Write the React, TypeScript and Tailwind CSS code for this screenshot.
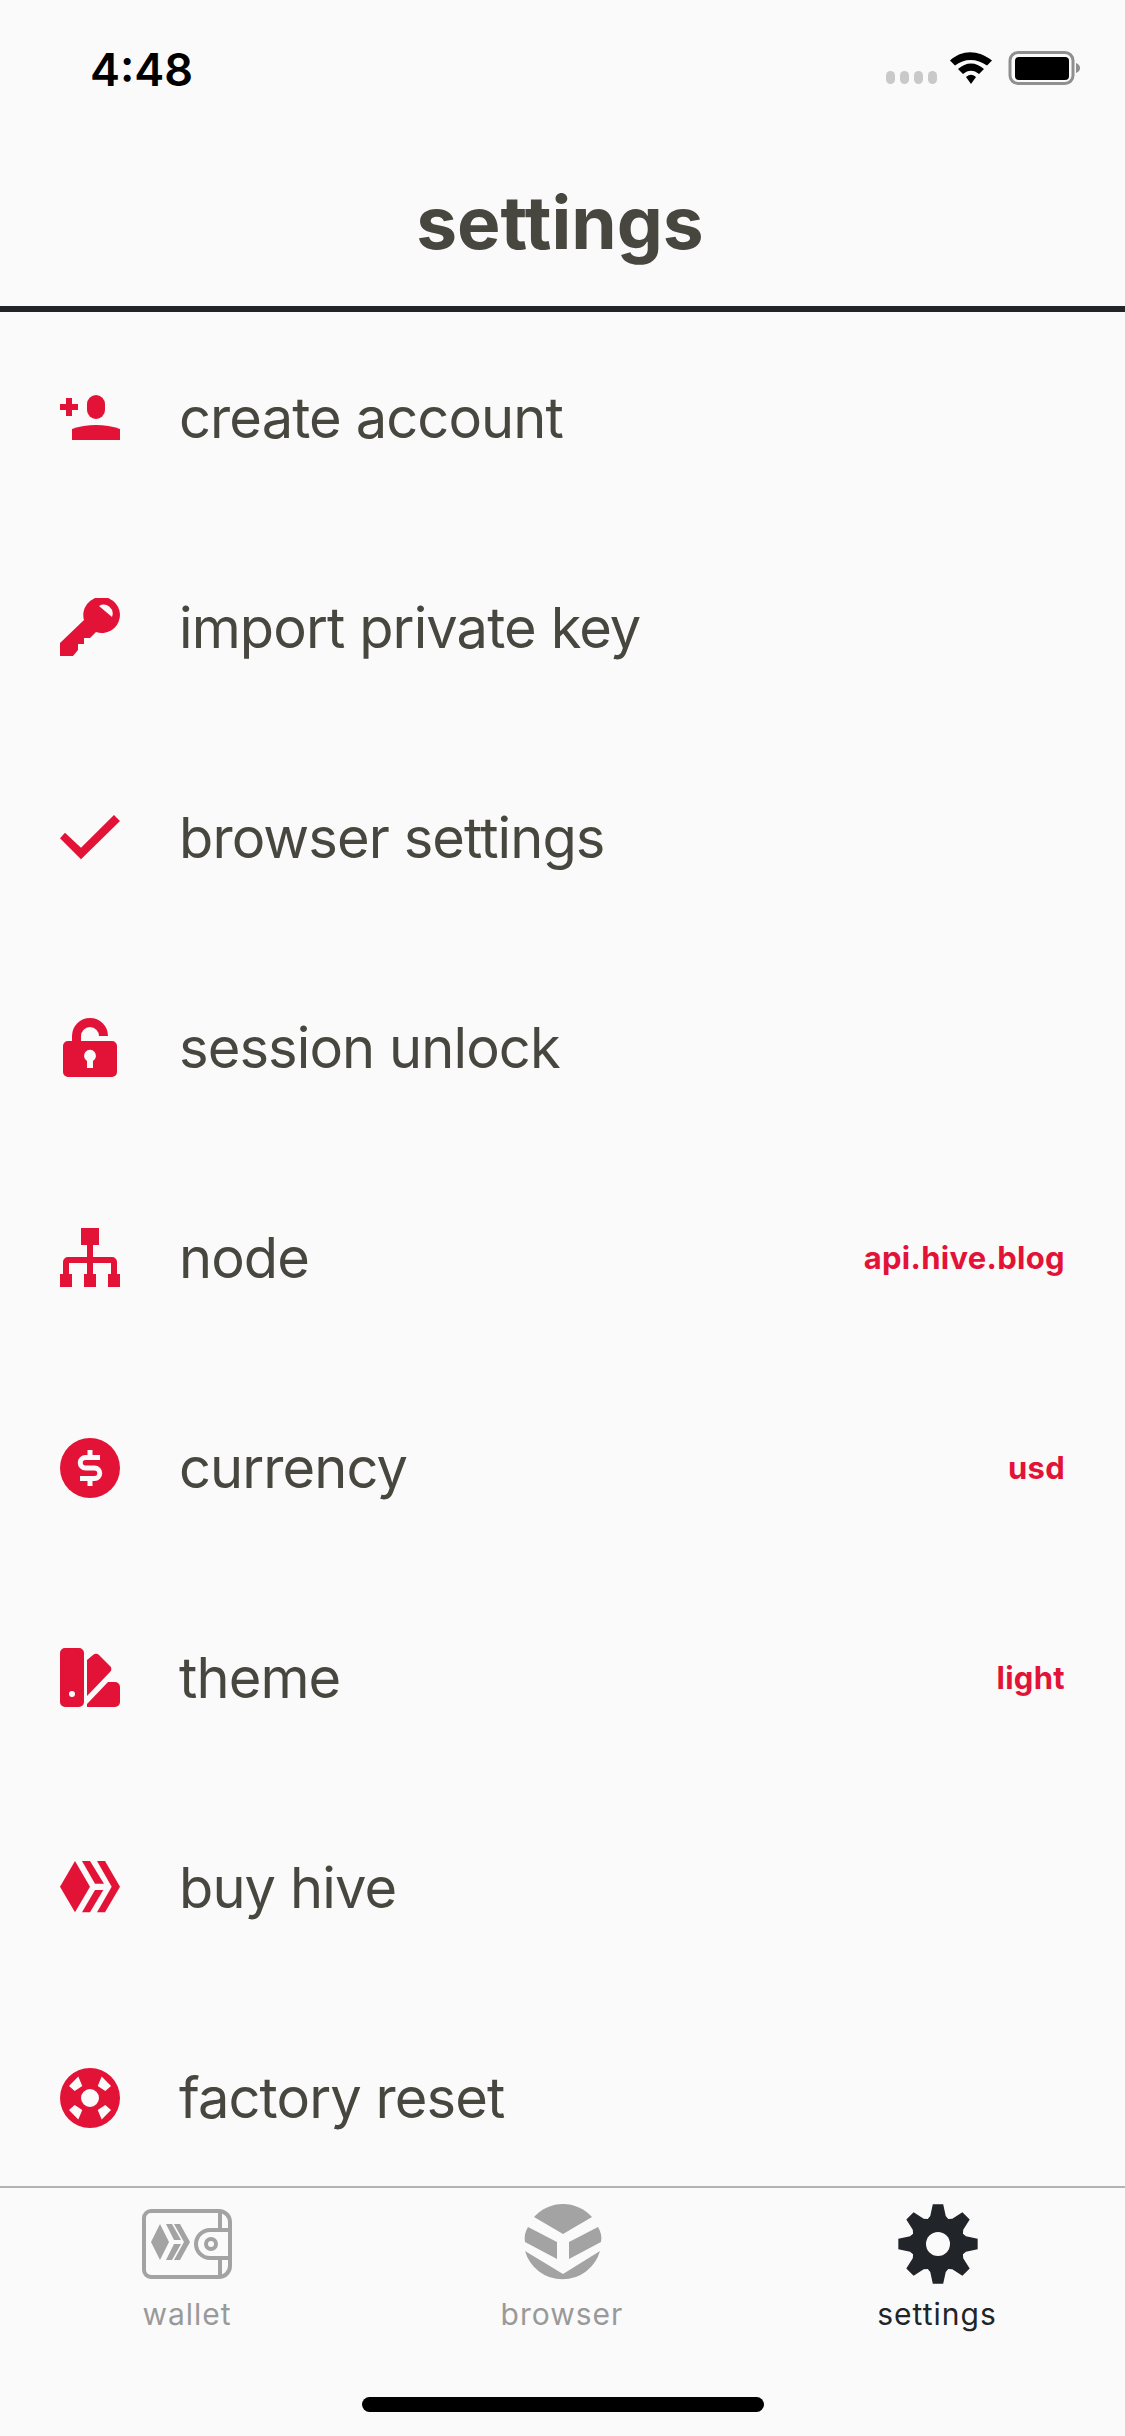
import React from "react";

const RED = "#e31337";

function gearPoints() {
  const pts: string[] = [];
  const cx = 40, cy = 40;
  for (let i = 0; i < 8; i++) {
    const a = (i * Math.PI) / 4 - Math.PI / 2;
    const p = (r: number, off: number) => {
      const x = cx + r * Math.cos(a + off);
      const y = cy + r * Math.sin(a + off);
      return x.toFixed(2) + "," + y.toFixed(2);
    };
    pts.push(p(27, -0.39), p(29, -0.27), p(40, -0.13), p(40, 0.13), p(29, 0.27), p(27, 0.39));
  }
  return pts.join(" ");
}

function Svg({ children, h = 60 }: { children: React.ReactNode; h?: number }) {
  return (
    <svg width="60" height={h} viewBox={`0 0 60 ${h}`} fill={RED} className="shrink-0">
      {children}
    </svg>
  );
}

const PersonAdd = () => (
  <Svg>
    <path d="M6 10h6v6h6v6h-6v6H6v-6H0v-6h6z" />
    <rect x="27" y="7" width="18" height="24" rx="9" />
    <path d="M12 52V41C19 38.500 28 37 36 37S53 38.500 60 41V52Z" />
  </Svg>
);

const KeyIcon = () => (
  <Svg>
    <path
      fillRule="evenodd"
      d="M42 -1A18 18 0 1 1 36 34L30 40H24V46H18V52L13 58H0V45L24 22A18 18 0 0 1 42 -1ZM39 8L52 19A9 9 0 0 0 39 8Z"
    />
  </Svg>
);

const CheckIcon = () => (
  <Svg>
    <path d="M0 30.300L5 24.700L21 39.800L54 7L60 13L21 51.300Z" />
  </Svg>
);

const LockIcon = () => (
  <Svg>
    <path d="M12 23V18A18 18 0 0 1 48 18H39A9 9 0 0 0 21 18V23Z" />
    <path
      fillRule="evenodd"
      d="M8 23H52A5 5 0 0 1 57 28V54A5 5 0 0 1 52 59H8A5 5 0 0 1 3 54V28A5 5 0 0 1 8 23ZM27 43V50H33V43A6 6 0 1 0 27 43Z"
    />
  </Svg>
);

const NodeIcon = () => (
  <Svg>
    <rect x="21" y="0" width="18" height="17" />
    <rect x="27" y="17" width="6" height="30" />
    <path d="M3 47V34A5 5 0 0 1 8 29H52A5 5 0 0 1 57 34V47H51V35H9V47Z" />
    <rect x="0" y="46" width="12" height="13" />
    <rect x="24" y="46" width="12" height="13" />
    <rect x="48" y="46" width="12" height="13" />
  </Svg>
);

const CurrencyIcon = () => (
  <Svg>
    <circle cx="30" cy="30" r="30" />
    <path
      d="M40 19.500H25.500A5.250 5.250 0 0 0 25.500 30H34.500A5.250 5.250 0 0 1 34.500 40.500H20M30 12V19.500M30 40.500V48"
      fill="none"
      stroke="#fafafa"
      strokeWidth="5"
    />
  </Svg>
);

const ThemeIcon = () => (
  <Svg>
    <path
      fillRule="evenodd"
      d="M5 0H19A5 5 0 0 1 24 5V54A5 5 0 0 1 19 59H5A5 5 0 0 1 0 54V5A5 5 0 0 1 5 0ZM12 43A3 3 0 1 0 12 49A3 3 0 0 0 12 43Z"
    />
    <path d="M27 12L33 7A4 4 0 0 1 39 7L50 18A4 4 0 0 1 50 24L27 48Z" />
    <path d="M48 34H55A5 5 0 0 1 60 39V54A5 5 0 0 1 55 59H27V56Z" />
  </Svg>
);

const HiveIcon = () => (
  <Svg>
    <path d="M15 3L30 28.700L15 54.300L0 28.700Z" />
    <path d="M22 3H30L44 25.700H35Z" />
    <path d="M35 32H43.300L30 54.300H22Z" />
    <path d="M37 3H45L60 28.700L45 54.300H37L51.700 28.700Z" />
  </Svg>
);

const LifeIcon = () => (
  <Svg>
    <path
      fillRule="evenodd"
      d="M30 0A30 30 0 1 1 30 60A30 30 0 1 1 30 0ZM30 21A9 9 0 1 0 30 39A9 9 0 1 0 30 21ZM18.300 8.500L22.300 18L14.700 23L9 18ZM41.700 8.500L37.700 18L45.300 23L51 18ZM18.300 51.500L22.300 42L14.700 37L9 42ZM41.700 51.500L37.700 42L45.300 37L51 42Z"
    />
  </Svg>
);

const rows: { icon: React.ReactNode; label: string; value?: string }[] = [
  { icon: <PersonAdd />, label: "create account" },
  { icon: <KeyIcon />, label: "import private key" },
  { icon: <CheckIcon />, label: "browser settings" },
  { icon: <LockIcon />, label: "session unlock" },
  { icon: <NodeIcon />, label: "node", value: "api.hive.blog" },
  { icon: <CurrencyIcon />, label: "currency", value: "usd" },
  { icon: <ThemeIcon />, label: "theme", value: "light" },
  { icon: <HiveIcon />, label: "buy hive" },
  { icon: <LifeIcon />, label: "factory reset" },
];

const WalletIcon = () => (
  <svg width="90" height="70" viewBox="0 0 90 70" className="shrink-0 -ml-[2px]">
    <path
      d="M9 2H77A11 11 0 0 1 88 13V57A11 11 0 0 1 77 68H9A7 7 0 0 1 2 61V9A7 7 0 0 1 9 2Z"
      fill="none"
      stroke="#a3a3a3"
      strokeWidth="4"
    />
    <path d="M78 3V20M78 50V67" stroke="#a3a3a3" strokeWidth="4" fill="none" />
    <path d="M86 21H68A14 14 0 0 0 68 49H86" fill="none" stroke="#a3a3a3" strokeWidth="4" />
    <circle cx="69" cy="35" r="5" fill="none" stroke="#a3a3a3" strokeWidth="4" />
    <g fill="#a3a3a3">
      <path d="M18 15L27 33L18 51L9 33Z" />
      <path d="M24 15H30L39 31H32Z" />
      <path d="M32 35H39L30 51H24Z" />
      <path d="M32 15H38L48 33L38 51H32L42 33Z" />
    </g>
  </svg>
);

const BrowserIcon = () => (
  <svg width="80" height="80" viewBox="0 0 80 80" className="shrink-0" fill="#a3a3a3">
    <path d="M11 13A39 39 0 0 1 69 13L40 30Z" />
    <path d="M5 23L34 38V55L2 38C1 33 2 28 5 23Z" />
    <path d="M75 23L46 38V55L78 38C79 33 78 28 75 23Z" />
    <path d="M2 47L40 70L77 47A39 39 0 0 1 2 47Z" />
  </svg>
);

const GearIcon = () => (
  <svg width="80" height="80" viewBox="0 0 80 80" className="shrink-0">
    <polygon points={gearPoints()} fill="#212529" />
    <circle cx="40" cy="40" r="12" fill="#fafafa" />
  </svg>
);

function Tab({
  icon,
  label,
  active,
}: {
  icon: React.ReactNode;
  label: string;
  active?: boolean;
}) {
  return (
    <div className="flex flex-col items-center">
      <div className="h-[88px] w-[90px] flex items-center justify-center">{icon}</div>
      <span
        className={`mt-[8px] -ml-[1px] text-[30px] leading-[36px] tracking-[1px] ${
          active ? "text-[#212529]" : "text-[#999999]"
        }`}
      >
        {label}
      </span>
    </div>
  );
}

export default function App() {
  return (
    <div
      className="w-[1125px] h-[2436px] bg-[#fafafa] flex flex-col overflow-hidden"
      style={{ fontFamily: "Inter, 'Noto Sans', sans-serif" }}
    >
      {/* status bar */}
      <div className="h-[132px] shrink-0 flex items-center justify-between pt-[6px] pl-[90px] pr-[35px]">
        <span className="text-[45px] font-semibold leading-none text-black">4:48</span>
        <svg width="208" height="36" viewBox="-4 0 208 36" className="shrink-0">
          <g fill="#c9c9c9">
            <rect x="0" y="20" width="9" height="13" rx="4.500" />
            <rect x="14" y="20" width="9" height="13" rx="4.500" />
            <rect x="28" y="20" width="9" height="13" rx="4.500" />
            <rect x="42" y="20" width="9" height="13" rx="4.500" />
          </g>
          <path d="M64 9.500C76 -1.500 92 -1.500 106 9.500L101 14.500C91 7 78 7 69 14.500Z" fill="#000" />
          <path d="M72 18C80 10.500 90 10.500 98 18L93 23C88 18.500 82 18.500 77 23Z" fill="#000" />
          <path d="M80 26C84 23 86 23 90 26L85 33Z" fill="#000" />
          <rect x="124" y="1.500" width="63" height="31" rx="8" fill="none" stroke="#8f8f8f" strokeWidth="3" />
          <rect x="129" y="6" width="54" height="23" rx="4" fill="#000" />
          <path d="M190 12C193 13 194 15 194 17S193 21 190 22Z" fill="#8f8f8f" />
        </svg>
      </div>

      {/* header */}
      <div className="h-[180px] shrink-0 flex items-center justify-center border-b-[6px] border-[#212529] pt-[6px] box-border">
        <span className="text-[73px] font-bold leading-none text-[#48473f] -ml-[5px]">settings</span>
      </div>

      {/* list */}
      <div className="flex-1 min-h-0 overflow-hidden pt-[1px]">
        {rows.map((r) => (
          <div key={r.label} className="h-[210px] flex items-center pl-[60px] pr-[60px]">
            {r.icon}
            <span className="ml-[59px] flex-1 text-[56px] tracking-[-0.9px] leading-none text-[#48473f]">
              {r.label}
            </span>
            {r.value && (
              <span className="-mt-[2px] text-[31px] tracking-[0.3px] font-bold leading-none text-[#e31337]">
                {r.value}
              </span>
            )}
          </div>
        ))}
      </div>

      {/* tab bar */}
      <div className="h-[250px] shrink-0 border-t-2 border-[#b3b3b3] relative">
        <div className="grid grid-cols-3 pt-[12px]">
          <Tab icon={<WalletIcon />} label="wallet" />
          <Tab icon={<BrowserIcon />} label="browser" />
          <Tab icon={<GearIcon />} label="settings" active />
        </div>
        <div className="absolute left-[362px] top-[209px] w-[402px] h-[15px] rounded-full bg-black" />
      </div>
    </div>
  );
}
